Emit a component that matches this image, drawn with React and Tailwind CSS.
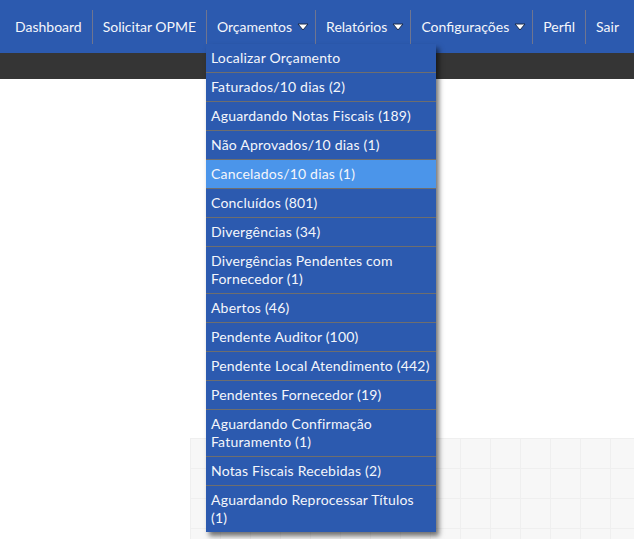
import React from "react";

const navItems = [
  { label: "Dashboard" },
  { label: "Solicitar OPME" },
  { label: "Orçamentos", caret: true, open: true },
  { label: "Relatórios", caret: true },
  { label: "Configurações", caret: true },
  { label: "Perfil" },
  { label: "Sair", last: true },
];

// "\n" marks where the original menu wraps
const menuItems = [
  "Localizar Orçamento",
  "Faturados/10 dias (2)",
  "Aguardando Notas Fiscais (189)",
  "Não Aprovados/10 dias (1)",
  "Cancelados/10 dias (1)",
  "Concluídos (801)",
  "Divergências (34)",
  "Divergências Pendentes com\nFornecedor (1)",
  "Abertos (46)",
  "Pendente Auditor (100)",
  "Pendente Local Atendimento (442)",
  "Pendentes Fornecedor (19)",
  "Aguardando Confirmação\nFaturamento (1)",
  "Notas Fiscais Recebidas (2)",
  "Aguardando Reprocessar Títulos\n(1)",
];

const Caret = () => (
  <svg width="12" height="8" viewBox="0 0 12 8" className="ml-[5px] mt-[1px]">
    <polygon points="1,1 11,1 6,7" fill="#ffffff" stroke="#1a2a4a" strokeWidth="1" />
  </svg>
);

const Dropdown = () => (
  <div className="absolute left-[-1px] top-[34px] z-50 w-[230px] bg-[#2c5aaf] shadow-[3px_4px_5px_rgba(0,0,0,0.55)]">
    {menuItems.map((item, i) => (
      <div
        key={item}
        className={`whitespace-pre-line px-[5px] py-[5px] text-[14px] leading-[18px] tracking-[0.2px] text-[#f4f6fb] ${
          i < menuItems.length - 1 ? "border-b border-[#6e6e6e]" : ""
        } ${item.startsWith("Cancelados") ? "bg-[#4b95ea]" : ""}`}
      >
        {item}
      </div>
    ))}
  </div>
);

export default function App() {
  return (
    <div className="min-h-[539px] overflow-hidden bg-white font-['Lato',sans-serif]">
      <nav className="flex h-[53px] items-center bg-[#2c5aaf] pl-[5px]">
        {navItems.map((item) => (
          <div key={item.label} className="relative flex h-[34px] items-center">
            <div
              className={`flex items-center whitespace-nowrap pl-[10px] text-[14px] text-[#f4f6fb] ${
                item.caret ? "pr-[6px]" : "pr-[10px]"
              }`}
            >
              {item.label}
              {item.caret && <Caret />}
            </div>
            {!item.last && <div className="h-[34px] w-px bg-[#6f7590]" />}
            {item.open && <Dropdown />}
          </div>
        ))}
      </nav>
      <div className="h-[26px] bg-[#353535]" />
      <div className="pt-[359px] pl-[190px]">
        <div className="h-[101px] bg-[#f7f7f7] bg-[linear-gradient(#efefef_1px,transparent_1px),linear-gradient(90deg,#efefef_1px,transparent_1px)] bg-[size:30px_30px]" />
      </div>
    </div>
  );
}
